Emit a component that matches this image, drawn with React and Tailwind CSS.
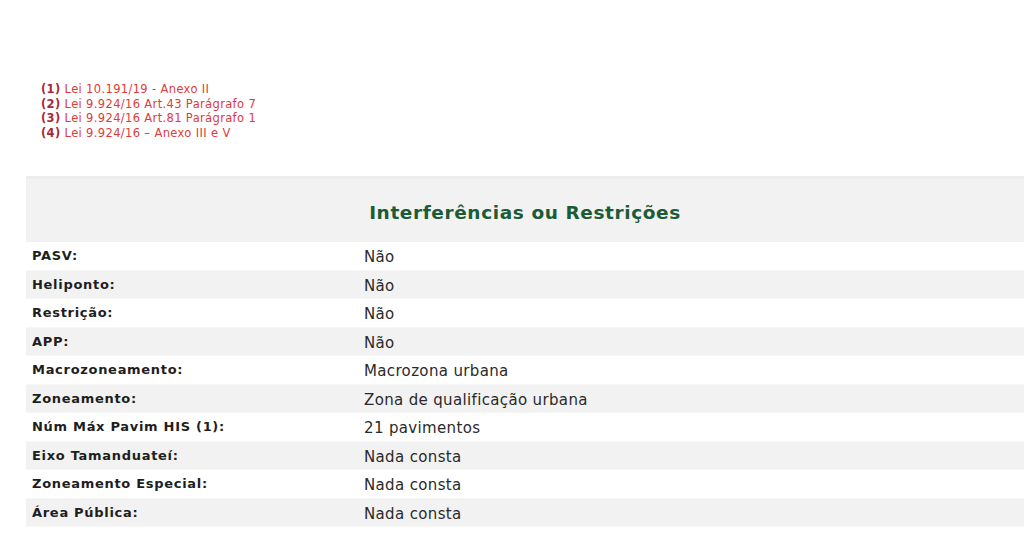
export default function App() {
  const notes = [
    ["(1)", "Lei 10.191/19 - Anexo II"],
    ["(2)", "Lei 9.924/16 Art.43 Parágrafo 7"],
    ["(3)", "Lei 9.924/16 Art.81 Parágrafo 1"],
    ["(4)", "Lei 9.924/16 – Anexo III e V"],
  ];
  const rows = [
    ["PASV:", "Não"],
    ["Heliponto:", "Não"],
    ["Restrição:", "Não"],
    ["APP:", "Não"],
    ["Macrozoneamento:", "Macrozona urbana"],
    ["Zoneamento:", "Zona de qualificação urbana"],
    ["Núm Máx Pavim HIS (1):", "21 pavimentos"],
    ["Eixo Tamanduateí:", "Nada consta"],
    ["Zoneamento Especial:", "Nada consta"],
    ["Área Pública:", "Nada consta"],
  ];
  return (
    <div
      className="w-[1024px] h-[558px] bg-white overflow-hidden"
      style={{ fontFamily: '"DejaVu Sans", Verdana, sans-serif' }}
    >
      <div className="pt-[82px] pl-[41px] text-[11.5px] leading-[14.5px] tracking-[0.35px]">
        {notes.map(([n, t]) => (
          <div key={n} className="text-[#e03a3a] whitespace-nowrap">
            <span className="font-bold text-[#a8283a]">{n}</span> {t}
          </div>
        ))}
      </div>
      <div className="ml-[26px] mt-[36px] w-[998px]">
        <div className="h-[66px] bg-[#f2f2f2] border-t-[3px] border-[#ececec] flex items-center justify-center">
          <span className="text-[18.5px] tracking-[0.6px] font-bold text-[#1b5b36] pt-[4px]">
            Interferências ou Restrições
          </span>
        </div>
        {rows.map(([l, v], i) => (
          <div
            key={l}
            className={`h-[28.5px] flex items-center border-b border-[#f7f7f7] ${
              i % 2 === 1 ? "bg-[#f2f2f2]" : "bg-white"
            }`}
          >
            <div className="w-[338px] pl-[6px] text-[13px] tracking-[0.7px] font-bold text-[#1e1e1e] whitespace-nowrap">
              {l}
            </div>
            <div className="pt-[3px] text-[15px] tracking-[0.35px] text-[#2a2a2a] whitespace-nowrap">
              {v}
            </div>
          </div>
        ))}
      </div>
    </div>
  );
}
